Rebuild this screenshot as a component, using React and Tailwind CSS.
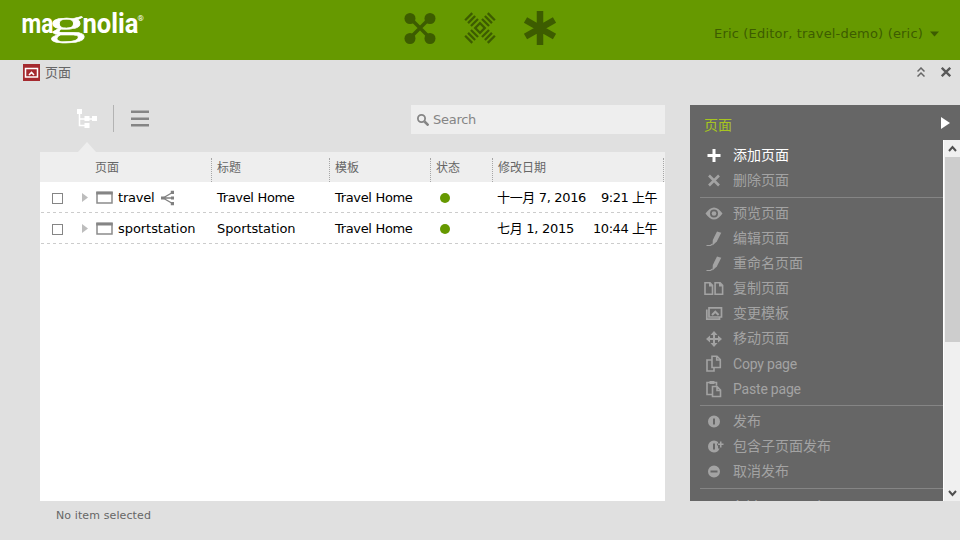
import React from "react";

const paths = {
  plus: <path d="M5.500 0h3v5h5v3h-5v5h-3V8h-5V5h5z" transform="translate(2 1)" />,
  cross: <path d="M4 2.500l10 10M14 2.500L4 12.500" fill="none" stroke="currentColor" strokeWidth="2.600" />,
  eye: (
    <>
      <path fillRule="evenodd" d="M.5 7.500Q9-4.500 17.500 7.500Q9 19.500 .5 7.500ZM9 3.500a4 4 0 100 8a4 4 0 100-8Z" />
      <circle cx="9" cy="7.500" r="2.3" />
    </>
  ),
  pencil: (
    <>
      <path d="M12 .5l4.300 1.200L11.800 10.500l-4.300 4 .3-5.500z" />
      <path d="M1.500 14.500h4l2-1.500" fill="none" stroke="currentColor" strokeWidth="1.200" />
    </>
  ),
  duplicate: (
    <path
      d="M-.3 2.300h5l2.500 2.500v8.900h-7.500zM9.800 2.300h5l2.500 2.500v8.900H9.800zM4.500 2.300v2.800h2.700M14.500 2.300v2.800h2.800"
      transform="translate(.3 -.5)"
      fill="none"
      stroke="currentColor"
      strokeWidth="1.6"
    />
  ),
  template: (
    <>
      <path d="M4 1.800h12.500v9.200H4zM1.800 3.500v9.700H14.500V11" fill="none" stroke="currentColor" strokeWidth="1.7" />
      <path d="M7 9L10.300 5.700 13.600 9" fill="none" stroke="currentColor" strokeWidth="2" />
    </>
  ),
  move: (
    <>
      <path d="M9 0l3.500 4h-7zM9 16l3.500-4h-7zM1 8l4-3.500v7zM17 8l-4-3.500v7z" />
      <path d="M9 2v12M3 8h12" stroke="currentColor" strokeWidth="2" />
    </>
  ),
  copy: (
    <path
      d="M7 .3h5L15.300 3.500v8H7zM11.700.3v3.700h3.600M7 4H2v11h7v-3.500"
      fill="none"
      stroke="currentColor"
      strokeWidth="1.6"
    />
  ),
  paste: (
    <>
      <path
        d="M7 13.500H2V1.500h9.500v3M7.500 5.500H12L15.500 9v6.500h-8zM12 5.500v4h3.500"
        fill="none"
        stroke="currentColor"
        strokeWidth="1.6"
      />
      <path d="M4.500 0h5v3h-5z" />
    </>
  ),
  publish: <path fillRule="evenodd" d="M9 1.500a6 6 0 100 12A6 6 0 009 1.500ZM8 4.500h2v6H8z" />,
  publishAll: (
    <path fillRule="evenodd" d="M9 1.500a6 6 0 100 12 6 6 0 005.500-4H13V6.500h-1V4.500h1V3A6 6 0 009 1.500ZM8 4.500h2v6H8zM15 2.500h1.500v2h2V6h-2v2.500H15V6h-2V4.500h2z" />
  ),
  unpublish: <path fillRule="evenodd" d="M9 1.500a6 6 0 100 12A6 6 0 009 1.500ZM5.500 6.500h7v2h-7z" />,
  share: (
    <>
      <path d="M14 5L4 10l10 5M4 10h10" fill="none" stroke="currentColor" strokeWidth="1.4" />
      <path d="M12 3h4v3.500h-4zM12 8.500h3v3h-3zM12 14h3v3h-3zM2 8.500h3.500v3H2z" />
    </>
  ),
};

function Icon({ name }) {
  return (
    <svg width="18" height="16" viewBox="0 0 18 16" fill="currentColor" className="shrink-0 overflow-visible">
      {paths[name]}
    </svg>
  );
}

const groups = [
  [
    ["plus", "添加页面", true],
    ["cross", "删除页面"],
  ],
  [
    ["eye", "预览页面"],
    ["pencil", "编辑页面"],
    ["pencil", "重命名页面"],
    ["duplicate", "复制页面"],
    ["template", "变更模板"],
    ["move", "移动页面"],
    ["copy", "Copy page"],
    ["paste", "Paste page"],
  ],
  [
    ["publish", "发布"],
    ["publishAll", "包含子页面发布"],
    ["unpublish", "取消发布"],
  ],
  [["share", "Add to campaign"]],
];

function Logo() {
  return (
    <svg width="130" height="44" viewBox="0 0 130 44" fill="#fff" className="ml-5 mt-2 shrink-0 overflow-visible">
      <text x="1.500" y="25" fontFamily="Roboto" fontWeight="700" fontSize="27" textLength="32" lengthAdjust="spacingAndGlyphs">ma</text>
      <text x="28.500" y="27" fontFamily="Liberation Serif" fontSize="36" textLength="37" lengthAdjust="spacingAndGlyphs" stroke="#fff" strokeWidth=".5">g</text>
      <text x="62.500" y="25" fontFamily="Roboto" fontWeight="700" fontSize="27" textLength="56" lengthAdjust="spacingAndGlyphs">nolia</text>
      <text x="117.500" y="13" fontFamily="Roboto" fontSize="8">®</text>
    </svg>
  );
}

function Header() {
  return (
    <header className="flex h-[60px] bg-[#690]">
      <Logo />
      <nav className="ml-[254px] mt-3 flex gap-7 text-[#3d5c00]">
        <svg width="32" height="32" viewBox="0 0 32 32" fill="currentColor">
          <path d="M6 6l20 20M26 6L6 26" stroke="currentColor" strokeWidth="3.500" />
          <circle cx="6" cy="6.500" r="5.500" />
          <circle cx="26" cy="6.500" r="5.500" />
          <circle cx="6" cy="26.500" r="5.500" />
          <circle cx="26" cy="26.500" r="5.500" />
        </svg>
        <svg width="32" height="32" viewBox="0 0 32 32" fill="none" stroke="currentColor" strokeWidth="2.300" className="overflow-visible">
          <g transform="translate(16 16) rotate(45)">
            <path d="M-3.400-3.400h6.800v6.800h-6.800z" />
            <path d="M-5-7.800h10M-5-11.900h10M-5-16h10M-5 7.800h10M-5 11.900h10M-5 16h10M-7.800-5v10M-11.900-5v10M-16-5v10M7.800-5v10M11.900-5v10M16-5v10" />
          </g>
        </svg>
        <svg width="33" height="35" viewBox="0 0 33 35" stroke="currentColor" strokeWidth="6.500" className="-mt-1 overflow-visible">
          <path d="M16 3v34M1.500 12L30.500 28.500M30.500 12L1.500 28.500" />
        </svg>
      </nav>
      <div className="ml-auto mr-[21px] mt-[25px] flex h-[18px] items-center gap-[7px] text-[#3d5c00]">
        <Label w={209} className="text-[13px]">Eric (Editor, travel-demo) (eric)</Label>
        <svg width="9" height="6" fill="currentColor">
          <path d="M0 .5h9L4.500 5.500z" />
        </svg>
      </div>
    </header>
  );
}

/* A line of text that is fitted to a fixed advance width. */
function Label({ w, className = "", children }) {
  const ref = React.useRef(null);
  const [spacing, setSpacing] = React.useState(0);
  React.useLayoutEffect(() => {
    const natural = ref.current.getBoundingClientRect().width;
    setSpacing((w - natural) / children.length);
  }, []);
  return (
    <span ref={ref} className={"whitespace-nowrap " + className} style={{ letterSpacing: spacing + "px" }}>
      {children}
    </span>
  );
}

const columns = "grid grid-cols-[171px_118px_101px_62px_171px]";

function Row({ name, nameWidth, title, titleWidth, date, dateWidth, time, timeWidth, shared }) {
  return (
    <div className={columns + " h-[31px] items-center text-[13px] text-black"}>
      <div className="flex items-center pl-3">
        <span className="mt-px size-[11px] shrink-0 border border-[#858585]" />
        <svg width="6" height="9" fill="#bdbdbd" className="ml-[19px] shrink-0">
          <path d="M0 0v9l6-4.500z" />
        </svg>
        <svg width="17" height="13" className="ml-2 shrink-0">
          <path d="M1 1.500h15v10.500H1z" fill="#fff" stroke="#8c8c8c" strokeWidth="1.500" />
          <path d="M.3.500h16.400v3H.3z" fill="#858585" />
        </svg>
        <span className="ml-[5px] flex items-center">
          <Label w={nameWidth}>{name}</Label>
        </span>
        {shared && (
          <svg width="14" height="16" className="ml-[6px] shrink-0" fill="#808080">
            <path d="M11.500 2.500L2 8l9.500 5.500M2 8h10" fill="none" stroke="#808080" strokeWidth="1.300" />
            <path d="M9.800.8H13V4H9.800zM10 6.500h3v3h-3zM9.800 12H13v3.200H9.800zM0 6.500h3.500v3H0z" />
          </svg>
        )}
      </div>
      <div className="pl-[6px]">
        <Label w={titleWidth}>{title}</Label>
      </div>
      <div className="pl-[6px]">
        <Label w={77.5}>Travel Home</Label>
      </div>
      <span className="ml-[10px] size-[10px] rounded-full bg-[#690]" />
      <div className="flex justify-between pl-[5px] pr-[6px]">
        <Label w={dateWidth}>{date}</Label>
        <Label w={timeWidth}>{time}</Label>
      </div>
    </div>
  );
}

function Dashes() {
  return (
    <svg width="625" height="1" className="-mt-px block">
      <path d="M1 .5h622" stroke="#ccc" strokeDasharray="3 3" />
    </svg>
  );
}

function Content() {
  return (
    <main className="ml-10 w-[625px] shrink-0">
      <div className="flex h-[29px] items-start">
        <svg width="23" height="20" className="ml-9 mt-1 shrink-0" fill="#fff">
          <path d="M3.500 4v12.500H11M3.500 10H20" fill="none" stroke="#fff" strokeWidth="1.500" />
          <path d="M1 0h5v5H1zM8.500 7h5v5h-5zM16 7h5v5h-5zM8.500 14h5v5h-5z" />
        </svg>
        <div className="ml-[14px] h-[27px] w-px bg-[#b3b3b3]" />
        <svg width="18" height="18" className="ml-[17px] mt-[5px]" fill="#858585">
          <path d="M0 .5h18v2.500H0zM0 7.500h18V10H0zM0 14h18v2.500H0z" />
        </svg>
        <div className="ml-auto flex h-[29px] w-[254px] items-center bg-[#eee] pl-[6px] text-[#858585]">
          <svg width="12" height="12" fill="none" stroke="#858585">
            <circle cx="4.500" cy="4.500" r="3.600" strokeWidth="1.800" />
            <path d="M7.500 7.500l4 4" strokeWidth="2.500" />
          </svg>
          <span className="ml-1 text-[13px]">
            <Label w={43}>Search</Label>
          </span>
        </div>
      </div>
      <svg width="18" height="10" className="ml-[38px] mt-2 block" fill="#eee">
        <path d="M0 10L9 0l9 10z" />
      </svg>
      <section className="h-[349px] bg-white">
        <div className={columns + " h-[30px] bg-[#eee] text-[12px] text-[#666]"}>
          {["页面", "标题", "模板", "状态", "修改日期"].map((t, i) => (
            <div key={t} className={"flex " + (i === 0 ? "pl-[55px]" : "pl-[6px]")}>
              <span className="mt-[7px]">{t}</span>
              <span className="ml-auto mt-[6px] h-[24px] border-r border-dotted border-[#a6a6a6] -mr-px last:mr-[-1px]" />
            </div>
          ))}
        </div>
        <Row name="travel" nameWidth={36.5} shared title="Travel Home" titleWidth={77.5} date="十一月 7, 2016" dateWidth={89} time="9:21 上午" timeWidth={56} />
        <Dashes />
        <Row name="sportstation" nameWidth={77.5} title="Sportstation" titleWidth={78.5} date="七月 1, 2015" dateWidth={77} time="10:44 上午" timeWidth={64} />
        <Dashes />
      </section>
      <div className="ml-4 mt-[7px] text-[11px] text-[#666]">
        <Label w={95}>No item selected</Label>
      </div>
    </main>
  );
}

function Actions() {
  return (
    <aside className="ml-[25px] flex h-[396px] flex-1 flex-col bg-[#666]">
      <div className="flex h-[35px] shrink-0 items-center justify-between pl-[14px] pr-[10px]">
        <span className="mt-[5px] text-[14px] text-[#a7c520]">页面</span>
        <svg width="9" height="12" fill="#fff">
          <path d="M0 0v12l9-6z" />
        </svg>
      </div>
      <div className="flex min-h-0 flex-1">
        <div className="min-w-0 flex-1 overflow-hidden pl-[10px]">
          {groups.map((items, g) => (
            <div key={g} className={g ? "border-t border-[#858585] pt-[3px] pb-[4px]" : "pt-[3px] pb-[4px]"}>
              {items.map(([icon, text, active]) => (
                <div
                  key={text}
                  className={
                    "flex h-[25px] items-center gap-[10px] pl-[5px] text-[14px] font-[Roboto,'Noto_Sans_CJK_SC',sans-serif] " +
                    (active ? "text-white" : "text-[#a3a3a3]") +
                    (icon === "share" ? " mt-px" : "")
                  }
                >
                  <Icon name={icon} />
                  <span className={"whitespace-nowrap " + (/^[A-Z]/.test(text) ? "mt-px tracking-[-0.2px]" : "")}>{text}</span>
                </div>
              ))}
            </div>
          ))}
        </div>
        <div className="flex w-[17px] shrink-0 flex-col items-center border-l border-white bg-[#f0f0f0]">
          <svg width="17" height="17" className="shrink-0">
            <path d="M5 11l3.500-4 3.500 4" fill="none" stroke="#505050" strokeWidth="2" />
          </svg>
          <div className="h-[185px] w-[15px] bg-[#cdcdcd]" />
          <svg width="17" height="17" className="mt-auto shrink-0">
            <path d="M5 7l3.500 4L12 7" fill="none" stroke="#505050" strokeWidth="2" />
          </svg>
        </div>
      </div>
    </aside>
  );
}

export default function App() {
  return (
    <div className="flex h-[540px] w-[960px] flex-col overflow-hidden bg-[#e0e0e0] font-['DejaVu_Sans','Noto_Sans_CJK_SC',sans-serif]">
      <Header />
      <div className="flex h-[45px] items-start pl-[23px] pr-[9px] text-[#666]">
        <svg width="17" height="17" className="mt-1">
          <path d="M0 0h17v17H0z" fill="#a52a2f" />
          <path d="M2.500 4.500h12v8.500h-12z" fill="none" stroke="#fff" strokeWidth="1.500" />
          <path d="M6 11l2.500-2.500L11 11" fill="none" stroke="#fff" strokeWidth="1.600" />
        </svg>
        <span className="ml-[5px] mt-[3px] text-[13px] leading-5">页面</span>
        <svg width="8" height="10" className="ml-auto mt-[7px]" fill="none" stroke="#666" strokeWidth="1.500">
          <path d="M.5 4.500L4 1l3.500 3.500M.5 9.500L4 6l3.500 3.500" />
        </svg>
        <svg width="10" height="10" className="ml-4 mt-[7px]" fill="none" stroke="#595959" strokeWidth="2.300">
          <path d="M.8.8l8.400 8.400M9.200.8L.8 9.200" />
        </svg>
      </div>
      <div className="flex">
        <Content />
        <Actions />
      </div>
    </div>
  );
}
